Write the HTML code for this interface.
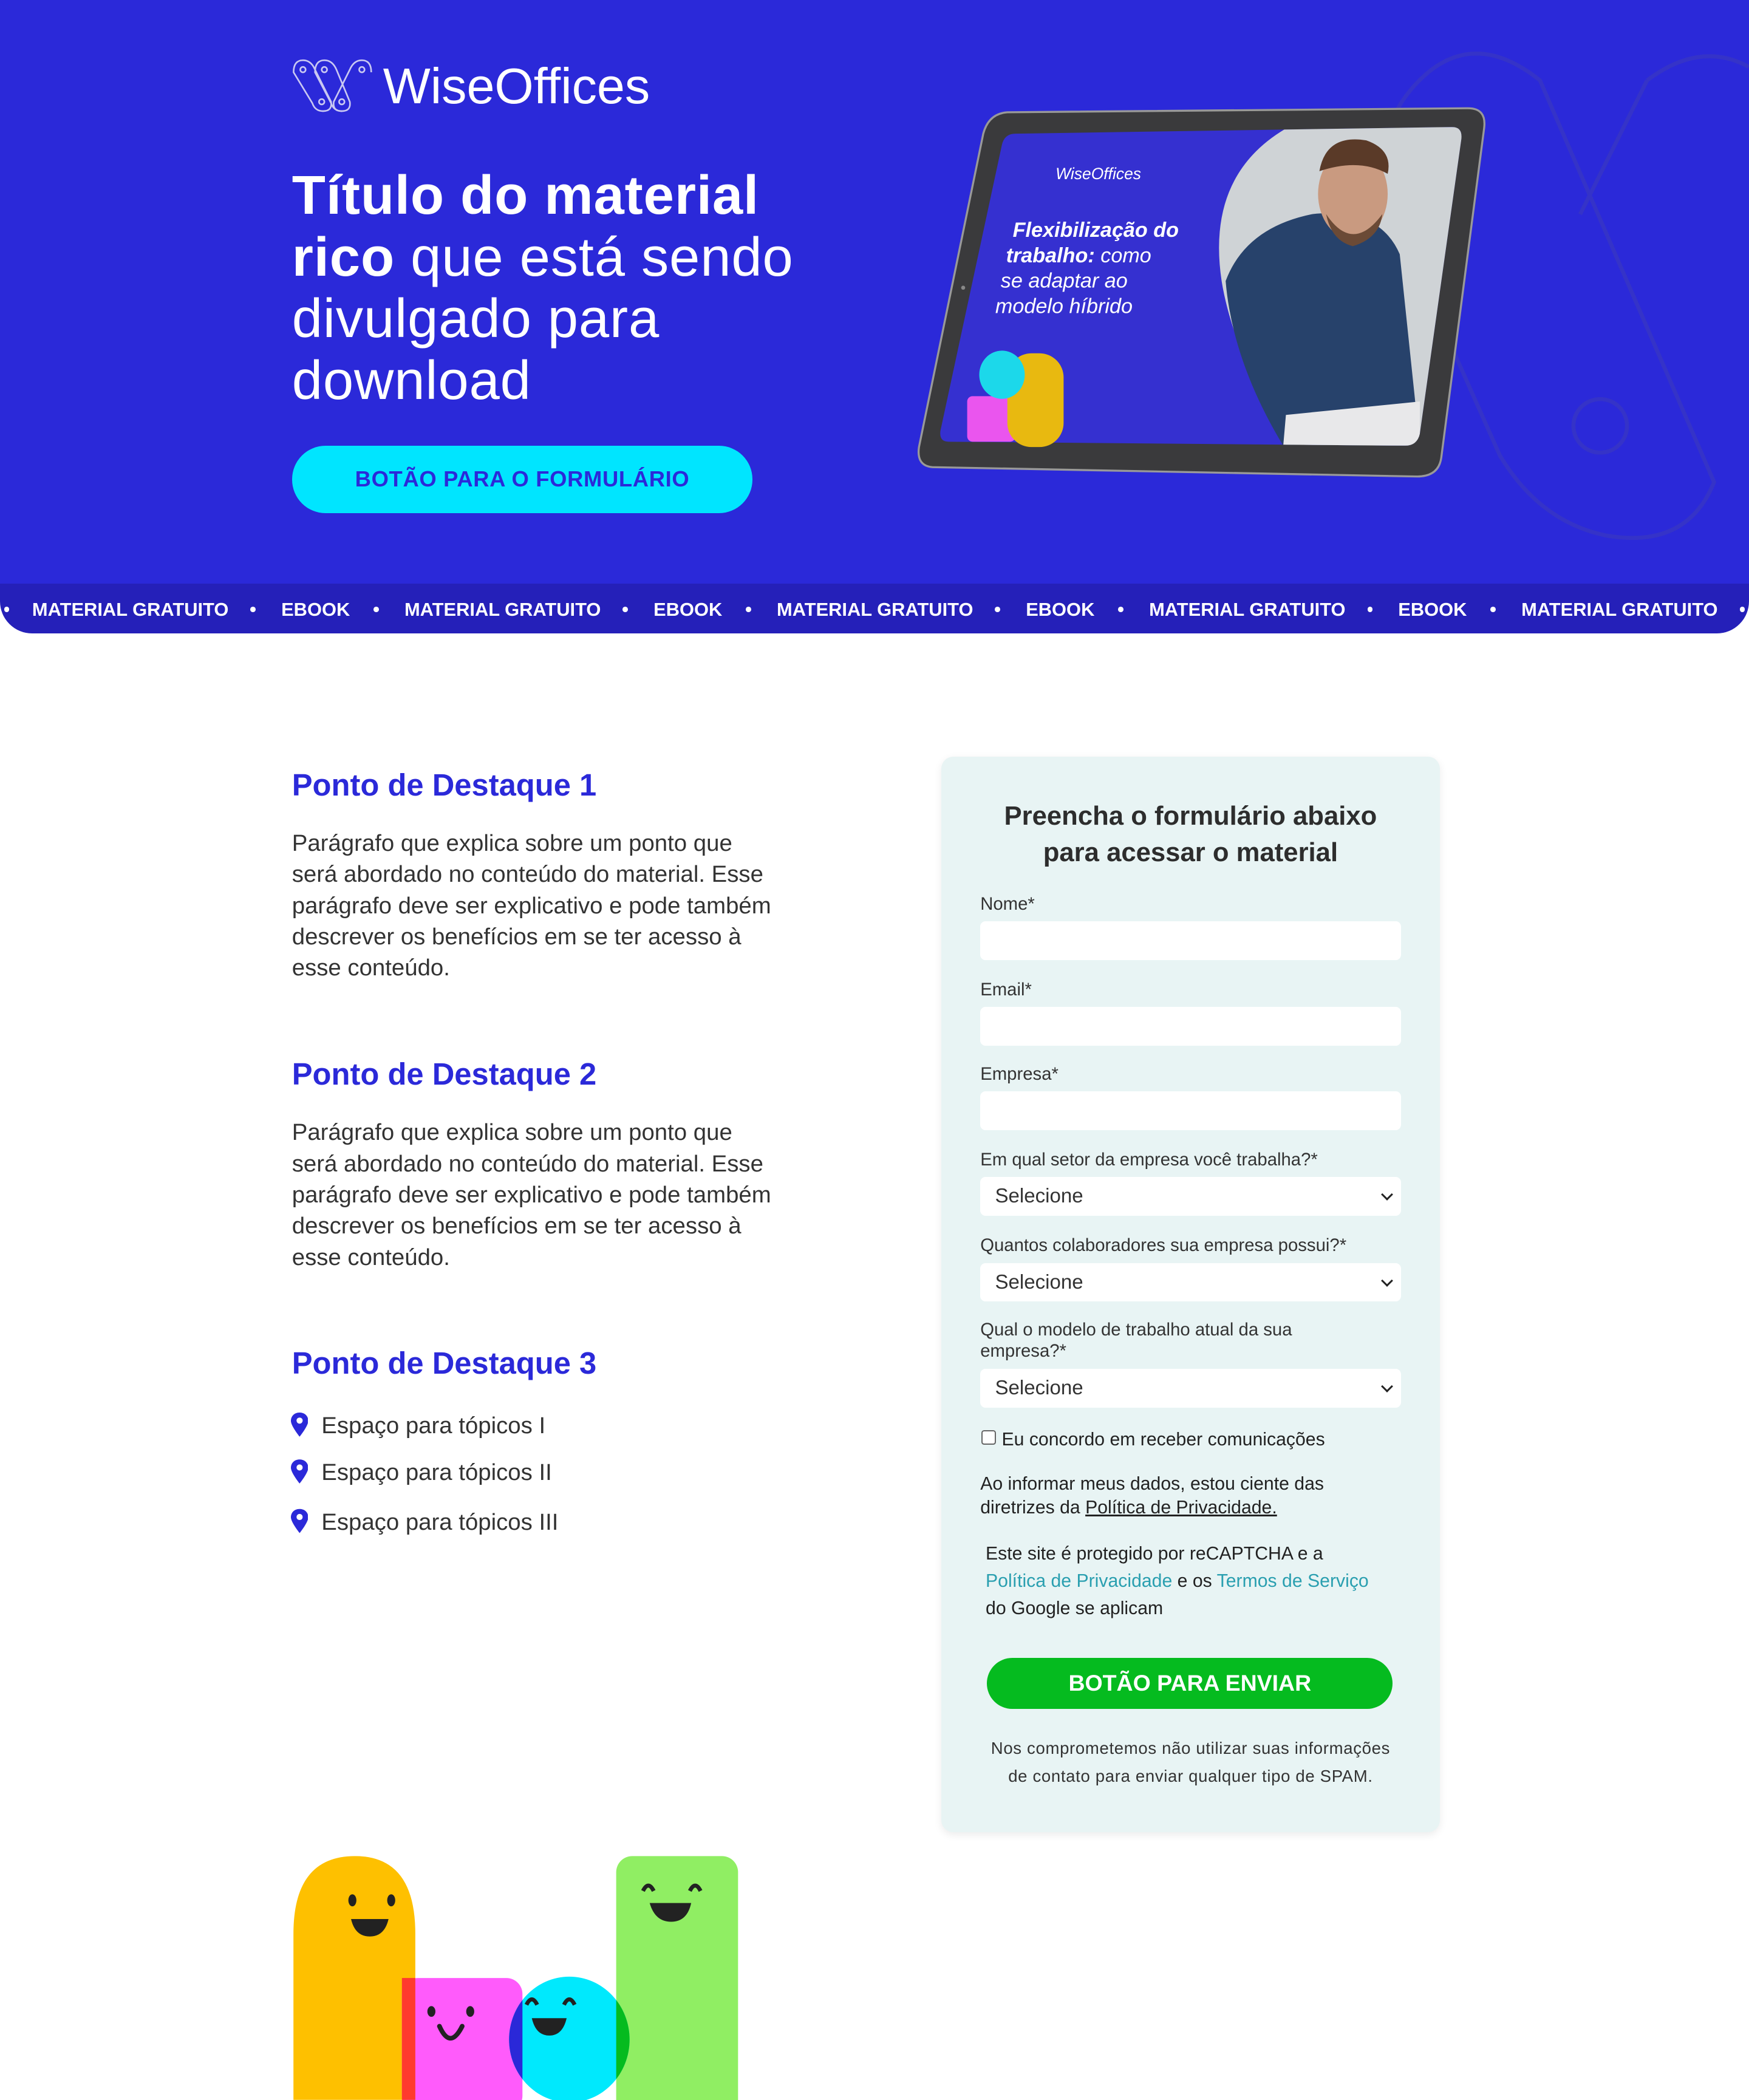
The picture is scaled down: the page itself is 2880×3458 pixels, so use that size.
<!DOCTYPE html>
<html><head><meta charset="utf-8">
<style>
html,body{margin:0;padding:0;background:#fff;overflow:hidden;width:2880px;height:3458px}
#w{position:relative;width:1306px;height:1568px;zoom:2.20521;font-family:"Liberation Sans",sans-serif;overflow:hidden}
.a{position:absolute;white-space:nowrap}
.h2{color:#2b29d9;font-weight:bold;font-size:23px;left:218px;line-height:26px}
.p{left:218px;font-size:17.4px;line-height:23.3px;color:#333}
.lbl{left:732px;font-size:13.3px;color:#333;line-height:16px}
.in{position:absolute;left:732px;width:314px;height:29px;background:#fff;border-radius:4px}
.sel{font-size:15px;color:#333;line-height:29px;padding-left:11px;box-sizing:border-box}
.sel:after{content:"";position:absolute;right:7px;top:10px;width:5px;height:5px;border-right:1.6px solid #222;border-bottom:1.6px solid #222;transform:rotate(45deg)}
.st{top:446px;font-size:14px;font-weight:bold;color:#fff;line-height:18px}
.dot{top:453px;width:4px;height:4px;border-radius:50%;background:#fff}
</style></head><body><div id="w">
<!-- hero -->
<div class="a" style="left:0;top:0;width:1306px;height:440px;background:#2b29d9"></div>
<svg class="a" style="left:1000px;top:0" width="306" height="440" viewBox="0 0 306 440" fill="none" stroke="#3533c8" stroke-width="3">
<path d="M60 60 Q100 20 150 60 L280 360 Q260 410 200 400 Q150 390 120 340 L40 160 Q20 100 60 60Z"/>
<circle cx="195" cy="318" r="20"/>
<path d="M230 60 Q270 30 306 50 M180 160 L230 60"/>
</svg>
<div class="a" style="left:0;top:436px;width:1306px;height:37px;background:#2520b9;border-radius:0 0 24px 24px"></div>
<div class="a dot" style="left:3px"></div>
<div class="a st" style="left:24px">MATERIAL GRATUITO</div><div class="a dot" style="left:187px"></div>
<div class="a st" style="left:210px">EBOOK</div><div class="a dot" style="left:279px"></div>
<div class="a st" style="left:302px">MATERIAL GRATUITO</div><div class="a dot" style="left:465px"></div>
<div class="a st" style="left:488px">EBOOK</div><div class="a dot" style="left:557px"></div>
<div class="a st" style="left:580px">MATERIAL GRATUITO</div><div class="a dot" style="left:743px"></div>
<div class="a st" style="left:766px">EBOOK</div><div class="a dot" style="left:835px"></div>
<div class="a st" style="left:858px">MATERIAL GRATUITO</div><div class="a dot" style="left:1021px"></div>
<div class="a st" style="left:1044px">EBOOK</div><div class="a dot" style="left:1113px"></div>
<div class="a st" style="left:1136px">MATERIAL GRATUITO</div><div class="a dot" style="left:1299px"></div>

<!-- logo -->
<svg class="a" style="left:217px;top:44px" width="62" height="40" viewBox="0 0 62 40" fill="none" stroke="#c9c8f2" stroke-width="1.2">
<path d="M2 10 Q2 1 9 1 Q15 1 18 8 L30 32 Q31 39 24 39 Q18 39 16 33 Z"/>
<path d="M18 10 Q18 1 25 1 Q31 1 34 8 L44 32 Q45 39 38 39 Q32 39 30 33 Z"/>
<path d="M60 10 Q60 1 53 1 Q47 1 44 8 L32 32 Q31 39 38 39"/>
<circle cx="9" cy="8" r="2"/><circle cx="25" cy="8" r="2"/><circle cx="53" cy="8" r="2"/><circle cx="23" cy="32" r="2"/><circle cx="38" cy="32" r="2"/>
</svg>
<div class="a" style="left:286px;top:42px;font-size:37.5px;color:#fff;line-height:44px">WiseOffices</div>

<div class="a" style="left:218px;top:123px;font-size:41px;line-height:46px;color:#fff;letter-spacing:0.4px"><b>Título do material</b><br><b>rico</b> que está sendo<br>divulgado para<br>download</div>
<div class="a" style="left:218px;top:333px;width:344px;height:50px;border-radius:25px;background:#00e5ff;color:#2b29d9;font-weight:bold;font-size:16.5px;line-height:50px;text-align:center;letter-spacing:0.3px">BOTÃO PARA O FORMULÁRIO</div>

<!-- tablet -->
<svg class="a" style="left:680px;top:75px" width="440" height="290" viewBox="680 75 440 290">
<path d="M752 84 L1096 81 Q1110 81 1108 96 L1076 342 Q1074 356 1058 356 L696 349 Q684 348 686 334 L734 100 Q738 85 752 84Z" fill="#3a3a3c" stroke="#999" stroke-width="1.5"/>
<path d="M758 100 L1084 95 Q1092 95 1091 104 L1060 324 Q1058 333 1049 333 L708 330 Q701 330 702 322 L748 108 Q750 100 758 100Z" fill="#3530d0"/>
<clipPath id="sc"><path d="M758 100 L1084 95 Q1092 95 1091 104 L1060 324 Q1058 333 1049 333 L708 330 Q701 330 702 322 L748 108 Q750 100 758 100Z"/></clipPath>
<g clip-path="url(#sc)">
<path d="M962 95 Q900 130 912 210 Q920 260 960 333 L1100 333 L1100 95Z" fill="#cfd3d6"/>
<path d="M915 210 Q930 170 980 160 Q1030 155 1045 190 L1060 333 L958 333 Q920 270 915 210Z" fill="#27426b"/>
<ellipse cx="1010" cy="145" rx="26" ry="34" fill="#c99a80"/>
<path d="M985 128 Q990 100 1020 105 Q1040 112 1036 130 Q1015 118 985 128Z" fill="#5a3a28"/>
<path d="M990 160 Q1010 190 1032 160 Q1030 178 1010 184 Q994 180 990 160Z" fill="#6b4a36"/>
<path d="M960 310 L1060 300 L1060 333 L958 333Z" fill="#e8e8ea"/>
</g>
<circle cx="719" cy="215" r="1.5" fill="#888"/>
<rect x="722" y="296" width="36" height="34" rx="4" fill="#ea55ee"/>
<rect x="752" y="264" width="42" height="70" rx="18" fill="#e8b910"/>
<ellipse cx="748" cy="280" rx="17" ry="18" fill="#1cd8ea"/>
<text x="788" y="134" font-family="Liberation Sans" font-style="italic" font-size="12" fill="#fff">WiseOffices</text>
<text font-family="Liberation Sans" font-style="italic" font-size="15.5" fill="#fff"><tspan x="756" y="177" font-weight="bold">Flexibilização do</tspan><tspan x="751" y="196"><tspan font-weight="bold">trabalho:</tspan> como</tspan><tspan x="747" y="215">se adaptar ao</tspan><tspan x="743" y="234">modelo híbrido</tspan></text>
</svg>

<!-- left content -->
<div class="a h2" style="top:573px">Ponto de Destaque 1</div>
<div class="a p" style="top:618px">Parágrafo que explica sobre um ponto que<br>será abordado no conteúdo do material. Esse<br>parágrafo deve ser explicativo e pode também<br>descrever os benefícios em se ter acesso à<br>esse conteúdo.</div>
<div class="a h2" style="top:789px">Ponto de Destaque 2</div>
<div class="a p" style="top:834px">Parágrafo que explica sobre um ponto que<br>será abordado no conteúdo do material. Esse<br>parágrafo deve ser explicativo e pode também<br>descrever os benefícios em se ter acesso à<br>esse conteúdo.</div>
<div class="a h2" style="top:1005px">Ponto de Destaque 3</div>
<svg class="a" style="left:217px;top:1055px" width="13" height="100" viewBox="0 0 13 100" fill="#2b29d9">
<g id="pin"><path d="M6.5 0 C2.5 0 0 2.8 0 6.2 C0 10 6.5 18 6.5 18 C6.5 18 13 10 13 6.2 C13 2.8 10.5 0 6.5 0Z"/><circle cx="6.5" cy="6" r="2.3" fill="#fff"/></g>
<use href="#pin" y="35"/><use href="#pin" y="72"/>
</svg>
<div class="a p" style="left:240px;top:1054px;line-height:22px">Espaço para tópicos I</div>
<div class="a p" style="left:240px;top:1089px;line-height:22px">Espaço para tópicos II</div>
<div class="a p" style="left:240px;top:1126px;line-height:22px">Espaço para tópicos III</div>

<!-- characters -->
<svg class="a" style="left:218px;top:1384px" width="336" height="184" viewBox="0 0 336 184">
<defs>
<clipPath id="ec"><ellipse cx="207" cy="139" rx="45" ry="47"/></clipPath>
</defs>
<path d="M1 60 Q1 2 47 2 Q92 2 92 60 L92 184 L1 184Z" fill="#fec000"/>
<rect x="82" y="93" width="90" height="100" rx="12" fill="#ff5bfb"/>
<rect x="82" y="93" width="10" height="91" fill="#ff3a2e"/>
<rect x="242" y="2" width="91" height="200" rx="12" fill="#90ee63"/>
<ellipse cx="207" cy="139" rx="45" ry="47" fill="#00e9fd"/>
<g clip-path="url(#ec)">
<rect x="150" y="90" width="22" height="100" fill="#2a28d8"/>
<rect x="242" y="90" width="20" height="100" fill="#05bb1f"/>
</g>
<g fill="#222">
<ellipse cx="45" cy="35" rx="3" ry="4.5"/><ellipse cx="74" cy="35" rx="3" ry="4.5"/>
<path d="M44 49 L72 49 Q69 62 58 62 Q47 62 44 49Z"/>
<ellipse cx="104" cy="118" rx="3" ry="4"/><ellipse cx="133" cy="118" rx="3" ry="4"/>
<path d="M110 129 Q118 147 127 129" fill="none" stroke="#222" stroke-width="3.5" stroke-linecap="round"/>
<path d="M175 113 Q179 105 183 113 M203 113 Q207 105 211 113" fill="none" stroke="#222" stroke-width="3"/>
<path d="M179 123 L205 123 Q202 136 192 136 Q182 136 179 123Z"/>
<path d="M262 28 Q266 20 270 28 M297 28 Q301 20 305 28" fill="none" stroke="#222" stroke-width="3"/>
<path d="M267 37 L298 37 Q295 51 283 51 Q271 51 267 37Z"/>
</g>
</svg>

<!-- form -->
<div class="a" style="left:703px;top:565px;width:372px;height:803px;background:#e8f4f4;border-radius:9px;box-shadow:0 2px 6px rgba(0,0,0,0.08)"></div>
<div class="a" style="left:703px;top:596px;width:372px;text-align:center;font-weight:bold;font-size:19.8px;line-height:27px;color:#2d2d2d">Preencha o formulário abaixo<br>para acessar o material</div>
<div class="a lbl" style="top:667px">Nome*</div><div class="in" style="top:688px"></div>
<div class="a lbl" style="top:731px">Email*</div><div class="in" style="top:752px"></div>
<div class="a lbl" style="top:794px">Empresa*</div><div class="in" style="top:815px"></div>
<div class="a lbl" style="top:858px">Em qual setor da empresa você trabalha?*</div><div class="in sel" style="top:879px">Selecione</div>
<div class="a lbl" style="top:922px">Quantos colaboradores sua empresa possui?*</div><div class="in sel" style="top:943px">Selecione</div>
<div class="a lbl" style="top:985px">Qual o modelo de trabalho atual da sua<br>empresa?*</div><div class="in sel" style="top:1022px">Selecione</div>
<div class="a" style="left:733px;top:1068px;width:9px;height:9px;border:1.2px solid #666;border-radius:2px;background:#fff"></div>
<div class="a" style="left:748px;top:1067px;font-size:13.7px;color:#222;line-height:16px">Eu concordo em receber comunicações</div>
<div class="a" style="left:732px;top:1099px;font-size:13.7px;color:#222;line-height:18px">Ao informar meus dados, estou ciente das<br>diretrizes da <u>Política de Privacidade.</u></div>
<div class="a" style="left:736px;top:1150px;font-size:13.7px;color:#222;line-height:20.5px">Este site é protegido por reCAPTCHA e a<br><span style="color:#2a9fb0">Política de Privacidade</span> e os <span style="color:#2a9fb0">Termos de Serviço</span><br>do Google se aplicam</div>
<div class="a" style="left:737px;top:1238px;width:303px;height:38px;border-radius:19px;background:#05bb1f;color:#fff;font-weight:bold;font-size:17px;line-height:38px;text-align:center">BOTÃO PARA ENVIAR</div>
<div class="a" style="left:703px;top:1295px;width:372px;text-align:center;font-size:12.5px;letter-spacing:0.3px;line-height:21px;color:#333">Nos comprometemos não utilizar suas informações<br>de contato para enviar qualquer tipo de SPAM.</div>
</div></body></html>
